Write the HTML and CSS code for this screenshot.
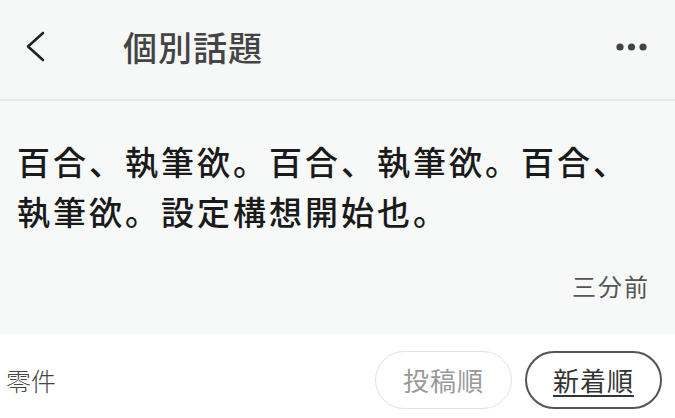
FILE: index.html
```html
<!DOCTYPE html>
<html lang="ja">
<head>
<meta charset="utf-8">
<link rel="stylesheet" href="styles.css">
</head>
<body>
<div class="page">
  <header class="header">
    <svg class="back" width="20" height="32" viewBox="0 0 20 32">
      <polyline points="17,2 2,15.5 17,29" fill="none" stroke="#222" stroke-width="2.6" stroke-linecap="round" stroke-linejoin="round"/>
    </svg>
    <div class="title">個別話題</div>
    <svg class="more" width="34" height="10" viewBox="0 0 34 10">
      <circle cx="4" cy="5" r="3.6" fill="#444"/>
      <circle cx="15.5" cy="5" r="3.6" fill="#444"/>
      <circle cx="27" cy="5" r="3.6" fill="#444"/>
    </svg>
  </header>
  <section class="post">
    <p class="post-text">百合、執筆欲。百合、執筆欲。百合、執筆欲。設定構想開始也。</p>
    <div class="post-time">三分前</div>
  </section>
  <footer class="footer">
    <div class="count">零件</div>
    <div class="sorts">
      <button class="sort sort-off">投稿順</button>
      <button class="sort sort-on">新着順</button>
    </div>
  </footer>
</div>
</body>
</html>
```
FILE: styles.css
```css
* { box-sizing: border-box; }
html, body { margin: 0; padding: 0; }
body {
  width: 675px;
  height: 418px;
  overflow: hidden;
  background: #ffffff;
  font-family: "Noto Sans CJK JP", "Noto Sans", sans-serif;
}
.page { width: 675px; height: 418px; display: flex; flex-direction: column; }

.header {
  height: 101px;
  flex: none;
  background: #f6f7f7;
  border-bottom: 2px solid #e8e9e9;
  display: flex;
  align-items: center;
  padding: 0 0 6px 26px;
}
.back { flex: none; display: block; }
.title {
  margin-left: 77px;
  font-size: 34px;
  font-weight: 500;
  letter-spacing: 1px;
  color: #444;
  line-height: 40px;
}
.more { margin-left: auto; margin-right: 25px; display: block; }

.post {
  height: 233px;
  flex: none;
  background: #f7f8f8;
  padding: 35px 40px 0 17px;
}
.post-text {
  margin: 0;
  font-size: 33px;
  font-weight: 500;
  letter-spacing: 3px;
  line-height: 50px;
  color: #1a1a1a;
  word-break: break-all;
}
.post-time {
  margin-top: 35px;
  margin-right: -15px;
  text-align: right;
  font-size: 24px;
  letter-spacing: 2px;
  line-height: 30px;
  color: #555;
}

.footer {
  flex: 1;
  display: flex;
  align-items: center;
  padding: 8px 13px 0 6px;
}
.count {
  font-size: 25px;
  font-weight: 300;
  color: #444;
  line-height: 30px;
}
.sorts { margin-left: auto; display: flex; gap: 13px; }
.sort {
  width: 137px;
  height: 58px;
  border-radius: 29px;
  background: #fff;
  font-family: "Noto Sans CJK JP", "Noto Sans", sans-serif;
  font-size: 26px;
  font-weight: 400;
  letter-spacing: 1px;
  padding: 0;
  line-height: 30px;
}
.sort-off { border: 1.5px solid #e2e3e3; color: #999; }
.sort-on {
  border: 2px solid #555;
  color: #333;
  text-decoration: underline;
  text-underline-offset: 4px;
  text-decoration-thickness: 1.5px;
}
```
